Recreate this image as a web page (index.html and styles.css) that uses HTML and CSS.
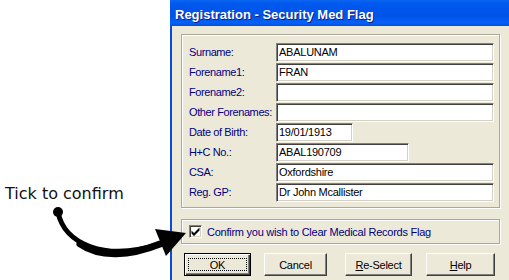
FILE: index.html
```html
<!DOCTYPE html>
<html>
<head>
<meta charset="utf-8">
<link rel="stylesheet" href="styles.css">
</head>
<body>
<div class="stage">
  <div class="note">
    <span class="note-text">Tick to confirm</span>
  </div>
  <div class="window">
    <div class="titlebar"><span class="title">Registration - Security Med Flag</span></div>
    <div class="client">
      <div class="group fields">
        <label class="lbl">Surname:</label><div class="tb full">ABALUNAM</div>
        <label class="lbl">Forename1:</label><div class="tb full">FRAN</div>
        <label class="lbl">Forename2:</label><div class="tb full"></div>
        <label class="lbl">Other Forenames:</label><div class="tb full"></div>
        <label class="lbl">Date of Birth:</label><div class="tb dob">19/01/1913</div>
        <label class="lbl">H+C No.:</label><div class="tb hc">ABAL190709</div>
        <label class="lbl">CSA:</label><div class="tb full">Oxfordshire</div>
        <label class="lbl">Reg. GP:</label><div class="tb full">Dr John Mcallister</div>
      </div>
      <div class="group confirm">
        <span class="check">
          <svg width="9" height="9" viewBox="0 0 9 9"><path d="M0.5 3.5 L3 6 L8.5 0.5 L8.5 3.5 L3 9 L0.5 6.5 Z" fill="#000"/></svg>
        </span>
        <span class="confirm-text">Confirm you wish to Clear Medical Records Flag</span>
      </div>
      <div class="buttons">
        <button class="btn ok"><span class="focus">OK</span></button>
        <button class="btn cancel">Cancel</button>
        <button class="btn reselect"><u>R</u>e-Select</button>
        <button class="btn help"><u>H</u>elp</button>
      </div>
    </div>
  </div>
  <svg class="arrow" width="200" height="280" viewBox="0 0 200 280">
    <circle cx="58" cy="212" r="5" fill="#000"/>
    <path d="M58,212 C64,244 105,262 160,244" fill="none" stroke="#000" stroke-width="5" stroke-linecap="round"/>
    <path d="M80,244 C100,258 130,256 160,244" fill="none" stroke="#000" stroke-width="7" stroke-linecap="round"/>
    <polygon points="155,229 166,256 186,233" fill="#000"/>
  </svg>
</div>
</body>
</html>
```

FILE: styles.css
```css
html, body {
  margin: 0;
  padding: 0;
  background: #fff;
}
body {
  width: 509px;
  height: 280px;
  overflow: hidden;
}
.stage {
  position: relative;
  display: flex;
  height: 280px;
}
.note {
  flex: none;
  width: 170px;
  box-sizing: border-box;
  padding: 184px 0 0 5px;
  font-family: "DejaVu Sans", sans-serif;
  font-size: 16px;
  color: #111;
}
.window {
  flex: none;
  width: 345px;
  height: 280px;
  box-sizing: border-box;
  border-left: 2px solid #0A4CD8;
  border-right: 5px solid #0757E8;
  background: #ECE9D8;
  display: flex;
  flex-direction: column;
}
.titlebar {
  height: 26px;
  margin-left: -2px;
  margin-right: -5px;
  padding-left: 5px;
  display: flex;
  align-items: center;
  background: linear-gradient(to bottom, #0A66F0 0%, #0058EE 15%, #0053E8 60%, #0760F5 88%, #0050E0 100%);
}
.title {
  font-family: "Liberation Sans", Arial, sans-serif;
  font-weight: bold;
  font-size: 13px;
  color: #fff;
  text-shadow: 1px 1px 0 #0A1E8C;
  padding-top: 2px;
}
.client {
  padding: 8px 3px 0 9px;
  font-family: "Liberation Sans", Arial, sans-serif;
  font-size: 11px;
  letter-spacing: -0.25px;
}
.group {
  width: 319px;
  box-sizing: border-box;
  border: 1px solid #ACA899;
  box-shadow: inset 1px 1px 0 #fff, 1px 1px 0 #fff;
}
.fields {
  height: 174px;
  padding: 8px 5px 0 7px;
  display: grid;
  grid-template-columns: 87px 218px;
  grid-auto-rows: 19px;
  row-gap: 1px;
}
.lbl {
  color: #000080;
  align-self: center;
  padding-bottom: 2px;
  white-space: nowrap;
  letter-spacing: -0.4px;
}
.tb {
  box-sizing: border-box;
  height: 19px;
  background: #fff;
  border: 1px solid;
  border-color: #808080 #fff #fff #808080;
  box-shadow: inset 1px 1px 0 #404040, inset -1px -1px 0 #D4D0C8;
  padding: 0 0 0 2px;
  line-height: 17px;
  color: #000;
  white-space: nowrap;
  overflow: hidden;
}
.dob { width: 77px; }
.hc { width: 133px; }
.confirm {
  margin-top: 11px;
  height: 25px;
  padding-left: 7px;
  display: flex;
  align-items: center;
}
.check {
  width: 13px;
  height: 13px;
  box-sizing: border-box;
  background: #fff;
  border: 1px solid;
  border-color: #808080 #fff #fff #808080;
  box-shadow: inset 1px 1px 0 #404040, inset -1px -1px 0 #D4D0C8;
  display: flex;
  align-items: center;
  justify-content: center;
  margin-right: 5px;
}
.confirm-text {
  color: #000080;
}
.buttons {
  margin-top: 9px;
  padding-left: 3px;
  display: flex;
}
.btn {
  height: 23px;
  box-sizing: border-box;
  margin: 0;
  padding: 0;
  background: #ECE9D8;
  border: 1px solid;
  border-color: #fff #404040 #404040 #fff;
  box-shadow: inset -1px -1px 0 #808080;
  font-family: "Liberation Sans", Arial, sans-serif;
  font-size: 11px;
  letter-spacing: -0.25px;
  color: #000;
  display: flex;
  align-items: center;
  justify-content: center;
}
.ok {
  width: 67px;
  border: 1px solid #000;
  box-shadow: inset 1px 1px 0 #fff, inset -1px -1px 0 #404040, inset -2px -2px 0 #808080;
}
.focus {
  width: 59px;
  height: 13px;
  box-sizing: border-box;
  border: 1px dotted #000;
  display: flex;
  align-items: center;
  justify-content: center;
}
.cancel { width: 63px; margin-left: 13px; }
.reselect { width: 67px; margin-left: 18px; }
.help { width: 69px; margin-left: 14px; }
.arrow {
  position: absolute;
  left: 0;
  top: 0;
  pointer-events: none;
}
```
